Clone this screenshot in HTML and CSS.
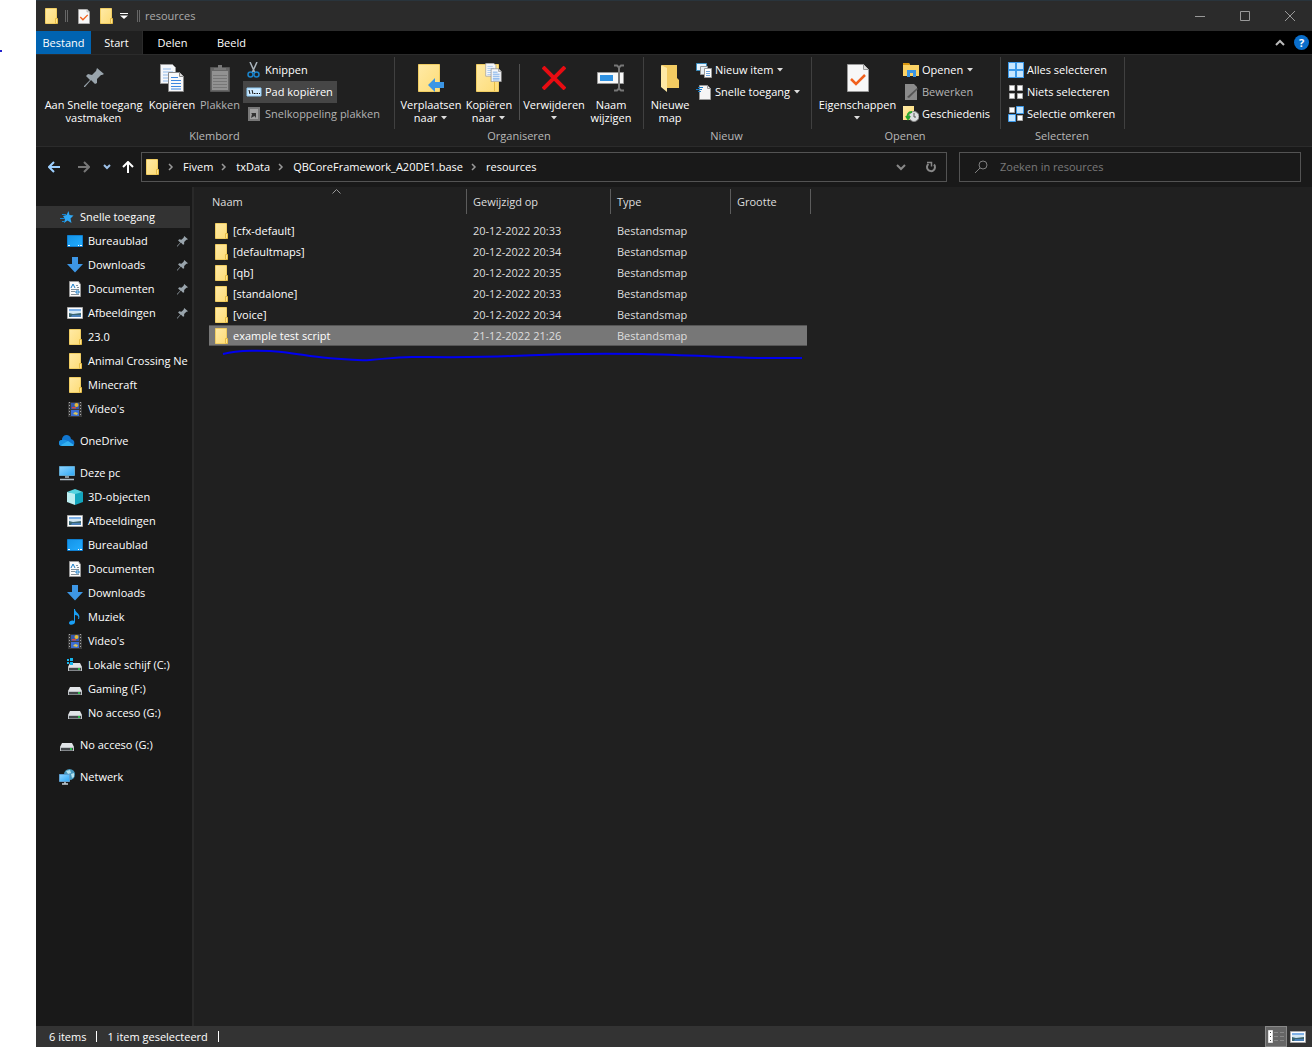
FILE: index.html
```html
<!DOCTYPE html>
<html lang="nl">
<head>
<meta charset="utf-8">
<title>resources</title>
<link rel="stylesheet" href="styles.css">
</head>
<body>
<svg class="defs" aria-hidden="true">
  <defs>
    <linearGradient id="g-folder" x1="0" y1="0" x2="1" y2="1"><stop offset="0" stop-color="#ffeaa6"/><stop offset="1" stop-color="#fddc77"/></linearGradient>
    <linearGradient id="g-blue" x1="0" y1="0" x2="1" y2="1"><stop offset="0" stop-color="#1492e6"/><stop offset="1" stop-color="#22adff"/></linearGradient>
    <linearGradient id="g-screen" x1="0" y1="0" x2="1" y2="1"><stop offset="0" stop-color="#8fd4ff"/><stop offset="1" stop-color="#2ea8f5"/></linearGradient>
  </defs>
  <symbol id="folder" viewBox="0 0 16 16"><path d="M2.500 .5h11v15h-11z" fill="url(#g-folder)" stroke="#f0cd63"/><path d="M12.500 15.500v-5h2v5z" fill="#ffe391" stroke="#e6bd45"/></symbol>
  <symbol id="pin" viewBox="0 0 20 20"><path d="M13 0l7 6-2 1-1 0-4 4 0 4-2 1-4-4-6 7-1 0 0-1 6-6-4-4 2-2 4 1 4-4z" fill="#99a4ac"/></symbol>
  <symbol id="down" viewBox="0 0 8 4"><path d="M1 0h6L4 3.500z" fill="#ddd"/></symbol>
  <symbol id="copy" viewBox="0 0 24 28"><path d="M.5.500h12l3 3v16H.5z" fill="#f5f7fa" stroke="#999"/><path d="M3 5h8M3 8h10M3 11h10M3 14h10M3 17h6" stroke="#8fb9ea"/><path d="M8.500 8.500h11l4 4v15h-15z" fill="#f8f9fb" stroke="#888"/><path d="M19.500 8.500v4h4" fill="#ddd" stroke="#888"/><path d="M11 13.500h7M11 16.500h10M11 19.500h10M11 22.500h10M11 25h10" stroke="#3d87e0"/></symbol>
  <symbol id="check" viewBox="0 0 22 28"><path d="M.5.500h16l5 5v22H.5z" fill="#f7f7f7" stroke="#999"/><path d="M16.500.500v5h5" fill="#ddd" stroke="#999"/><path d="M4 15l5 5 9-9" fill="none" stroke="#f1601c" stroke-width="2.500"/></symbol>
  <symbol id="desktop" viewBox="0 0 16 16"><path d="M.5 2.500h15v11H.5z" fill="url(#g-blue)" stroke="#0f7fd0"/><path d="M1 12.500h2M11 12.500h1M13 12.500h2" stroke="#fff"/></symbol>
  <symbol id="download" viewBox="0 0 16 16"><path d="M5 0h6v7h5L8 15.500 0 7h5z" fill="#3d97e6"/></symbol>
  <symbol id="document" viewBox="0 0 16 16"><path d="M2.500.500h9l2 3v12h-11z" fill="#fafafa" stroke="#999"/><path d="M4 8.500h8M4 10.500h4M4 13.500h8M9 4.500h2M10 6.500h2" stroke="#82909b"/><path d="M4 7l2-4 2 4M9 10h3v2H9z" fill="none" stroke="#1c7ec7"/></symbol>
  <symbol id="picture" viewBox="0 0 16 16"><path d="M.5 2.500h15v11H.5z" fill="#fff" stroke="#aaa"/><path d="M2 4h12v8H2z" fill="#7fb1e8"/><path d="M2 6h12v3H2z" fill="#d4e8f4"/><path d="M2 8l4 1 8-1v4H2z" fill="#3a6570"/><path d="M5 10h9v2H4z" fill="#4b80b8"/></symbol>
  <symbol id="video" viewBox="0 0 16 16"><path d="M1 1h14v15H1z" fill="#3a3a3a"/><path d="M2.500 1v15M13.500 1v15" stroke="#aaa" stroke-dasharray="1 2"/><path d="M4 2h8v6H4z" fill="#3457ad"/><path d="M4 9h8v6H4z" fill="#3d6fd3"/><path d="M5 6h4v1.500H5z" fill="#d04a42"/><circle cx="9.500" cy="4" r="2" fill="#e6b934"/><path d="M6 13l2-2 3 1-1 2z" fill="#ddc657"/></symbol>
  <symbol id="cloud" viewBox="0 0 16 16"><path d="M3 7a4.500 4.500 0 0 1 9-1 4 4 0 0 1 2 7H3a3 3 0 0 1 0-6z" fill="#1176cf"/><path d="M3 7c3-1 6 1 8 3l-8 3a3 3 0 0 1 0-6z" fill="#1a91e2"/><path d="M2 12l7-4 6 4-1 1H3z" fill="#34b1f1"/></symbol>
  <symbol id="pc" viewBox="0 0 16 16"><path d="M.5 1.500h15v9H.5z" fill="url(#g-screen)" stroke="#5fa7d0"/><path d="M6 12h4M1 14.500h14" stroke="#aebdc6" stroke-width="1.500"/></symbol>
  <symbol id="cube" viewBox="0 0 16 16"><path d="M0 3l8 1v12l-8-3z" fill="#bdeef1"/><path d="M8 4l8-1v10l-8 3z" fill="#12a5bd"/><path d="M0 3l8-3 8 3-8 2z" fill="#54d3e0"/></symbol>
  <symbol id="music" viewBox="0 0 16 16"><path d="M7 0h1c0 4 6 4 4 10h-1c1-3-1-4-3-4v7c0 3-6 4-6 1 0-2 3-3 5-2z" fill="#1a9ff5"/></symbol>
  <symbol id="drive" viewBox="0 0 16 16"><path d="M3 6h10l2 4H1z" fill="#e1e4e7"/><path d="M1 10h14v4H1z" fill="#bfc3c7"/><path d="M2 11h12v2.500H2z" fill="#43474a"/><path d="M11 12h2" stroke="#25e34c" stroke-width="1.500"/></symbol>
  <symbol id="sysdrive" viewBox="0 0 16 16"><path d="M3 6h10l2 4H1z" fill="#e1e4e7"/><path d="M1 10h14v4H1z" fill="#bfc3c7"/><path d="M2 11h12v2.500H2z" fill="#43474a"/><path d="M11 12h2" stroke="#25e34c" stroke-width="1.500"/><path d="M0 2h2v2H0zM3 1h3v3H3zM0 5h2v2H0zM3 5h3v3H3z" fill="#15b7f0"/></symbol>
  <symbol id="network" viewBox="0 0 16 16"><circle cx="10.500" cy="5.500" r="5.500" fill="#4697bd"/><path d="M7 2l4-1 1 3-3 1zM12 5l3-1v4l-2 1z" fill="#b5e1ee"/><path d="M.5 5.500h10v7H.5z" fill="url(#g-screen)" stroke="#5e9fd0"/><path d="M3 15h6M6 13v2" stroke="#c5d0d6" stroke-width="1.500"/></symbol>
  <symbol id="star" viewBox="0 0 16 16"><path d="M9.500 2l1 4 4 .5-3 3 1 4.500-4-2.500L5 14l1-4-2-3 3.500-1z" fill="#2fa8f5"/><path d="M3 5.500h4M1 9.500h5M3 12.500h3" stroke="#1683cd"/></symbol>
  <symbol id="chev" viewBox="0 0 6 8"><path d="M1 1l3 3-3 3" fill="none" stroke="#999" stroke-width="1.500"/></symbol>
</svg>

<div class="page">
<span class="dot"></span>
<main class="window">
  <header class="titlebar">
    <svg class="i16"><use href="#folder"/></svg>
    <span class="grip"></span>
    <button class="quick" aria-label="Eigenschappen"><svg class="i-check-s"><use href="#check"/></svg></button>
    <button class="quick" aria-label="Nieuwe map"><svg class="i16"><use href="#folder"/></svg></button>
    <button class="quick caret" aria-label="Aanpassen"><svg width="8" height="6"><path d="M0 .5h8" stroke="#fff"/><path d="M0 2.500h8L4 6z" fill="#fff"/></svg></button>
    <span class="grip"></span>
    <h1 class="title">resources</h1>
    <div class="controls">
      <button aria-label="Minimaliseren"><svg width="10" height="10"><path d="M0 5.500h10" stroke="#999"/></svg></button>
      <button aria-label="Maximaliseren"><svg width="10" height="10"><path d="M.5.500h9v9h-9z" fill="none" stroke="#999"/></svg></button>
      <button aria-label="Sluiten"><svg width="10" height="10"><path d="M0 0l10 10M10 0L0 10" stroke="#999"/></svg></button>
    </div>
  </header>

  <nav class="tabs">
    <button class="tab file">Bestand</button>
    <button class="tab active">Start</button>
    <button class="tab">Delen</button>
    <button class="tab">Beeld</button>
    <div class="tabs-end">
      <button aria-label="Lint inklappen"><svg width="10" height="7"><path d="M1 6l4-4 4 4" fill="none" stroke="#bbb" stroke-width="2"/></svg></button>
      <button class="help" aria-label="Help">?</button>
    </div>
  </nav>

  <section class="ribbon">
    <div class="group clip">
      <div class="tools">
        <button class="big w107"><svg class="i-pin"><use href="#pin"/></svg><span>Aan Snelle toegang<br>vastmaken</span></button>
        <button class="big w50"><svg class="i-copy"><use href="#copy"/></svg><span>Kopiëren</span></button>
        <button class="big w46 off"><svg width="20" height="28"><path d="M.5 3.500h19v24H.5z" fill="#666" stroke="#555"/><path d="M2 7h16v19H2z" fill="#929292"/><path d="M3 11.500h14M3 14.500h14M3 17.500h14M3 20.500h14M3 23.500h14" stroke="#777"/><path d="M4 6V4h4V1h4v3h4v2z" fill="#777"/></svg><span>Plakken</span></button>
        <div class="stack">
          <button class="small"><svg class="i16"><path d="M4 0l5 11M11 0L6 11" stroke="#aab4bc" stroke-width="1.500"/><circle cx="4.500" cy="12.500" r="2.500" fill="none" stroke="#1a83ca" stroke-width="1.500"/><circle cx="10.500" cy="12.500" r="2.500" fill="none" stroke="#1a83ca" stroke-width="1.500"/></svg>Knippen</button>
          <button class="small hover"><svg class="i16"><path d="M1 4h14v8H1z" fill="#cfeaff" stroke="#8ecbf5"/><path d="M3 6l1 4M6 6l1 4M8 9.500h1.500M10.500 9.500H12M13 9.500h1" stroke="#111"/></svg>Pad kopiëren</button>
          <button class="small off"><svg class="i16"><path d="M2 1h12v14H2z" fill="#777"/><path d="M4 3h8v10H4z" fill="#a0a0a0"/><path d="M5 12l1-4-1-1h5v5L8.500 10z" fill="#333"/></svg>Snelkoppeling plakken</button>
        </div>
      </div>
      <h2>Klembord</h2>
    </div>

    <div class="group org">
      <div class="tools">
        <button class="big w62"><svg width="26" height="30"><path d="M.5 1.500h21v27H.5z" fill="url(#g-folder)" stroke="#f0cd63"/><path d="M10 22l7-7v4h9v6h-9v4z" fill="#3b96e5"/></svg><span>Verplaatsen<br>naar <svg class="dd"><use href="#down"/></svg></span></button>
        <button class="big w54"><svg width="26" height="30"><path d="M.5 1.500h22v27H.5z" fill="url(#g-folder)" stroke="#f0cd63"/><path d="M18.500 28v-9" stroke="#e6bd45"/><svg x="9" y="0" width="17" height="19"><use href="#copy"/></svg></svg><span>Kopiëren<br>naar <svg class="dd"><use href="#down"/></svg></span></button>
        <span class="sep"></span>
        <button class="big w64"><svg width="24" height="24"><path d="M1 1l22 22M23 1L1 23" stroke="#e80c12" stroke-width="4"/></svg><span>Verwijderen<br><svg class="dd"><use href="#down"/></svg></span></button>
        <button class="big w50"><svg width="28" height="28"><path d="M.5 8.500h26v11H.5z" fill="#f8f8f8" stroke="#999"/><path d="M3 11h13v6H3z" fill="#2f92e2"/><path d="M17 1.500h3l2 2 2-2h3M22 3v22M17 26.500h3l2-2 2 2h3" fill="none" stroke="#777" stroke-width="2"/></svg><span>Naam<br>wijzigen</span></button>
      </div>
      <h2>Organiseren</h2>
    </div>

    <div class="group new">
      <div class="tools">
        <button class="big w46"><svg width="20" height="28"><path d="M2 1h15v13l2 2v8H2z" fill="#f3cb62"/><path d="M1 1l6 3v24l-6-5z" fill="#ffe9a4"/></svg><span>Nieuwe<br>map</span></button>
        <div class="stack">
          <button class="small"><svg class="i16"><path d="M.5 1.500h10v7H.5z" fill="#e8f5ff" stroke="#3b8fc0"/><path d="M4.500 4.500h7v8h-7z" fill="#e7eef3" stroke="#999"/><path d="M8.500 6.500h7v9h-7z" fill="#fff" stroke="#999"/><path d="M10 9.500h4M10 11.500h4M10 13.500h4" stroke="#6fa4dc"/></svg>Nieuw item <svg class="dd"><use href="#down"/></svg></button>
          <button class="small"><svg class="i16"><path d="M3.500 1.500h8l3 3v11h-11z" fill="#f5f5f5" stroke="#999"/><path d="M11.500 1.500v3h3" stroke="#999" fill="none"/><path d="M2 3.500h5M0 5.500h6M2 7.500h3" stroke="#1779c2"/></svg>Snelle toegang <svg class="dd"><use href="#down"/></svg></button>
        </div>
      </div>
      <h2>Nieuw</h2>
    </div>

    <div class="group open">
      <div class="tools">
        <button class="big w85"><svg class="i-check"><use href="#check"/></svg><span>Eigenschappen<br><svg class="dd"><use href="#down"/></svg></span></button>
        <div class="stack">
          <button class="small"><svg class="i16"><path d="M0 1h6l1 2h9v11H0z" fill="#fbd264"/><path d="M0 1h6l1 2H0z" fill="#d9960f"/><path d="M4 15V8h9v7h-3v-4H7v4z" fill="#3c95e2"/></svg>Openen <svg class="dd"><use href="#down"/></svg></button>
          <button class="small off"><svg class="i16"><path d="M2 0h9l3 3v13H2z" fill="#8b8b8b"/><path d="M4 13L14 4l1 1-9 9z" fill="#555"/></svg>Bewerken</button>
          <button class="small"><svg class="i16"><path d="M0 0h11v14H0z" fill="url(#g-folder)"/><circle cx="11" cy="10.500" r="5" fill="#dde0e1" stroke="#888"/><path d="M11 7v4h2" fill="none" stroke="#555"/><path d="M9 6C5 6 4 9 5 12M3 10l2 3 2-3" fill="none" stroke="#26a52d" stroke-width="2"/></svg>Geschiedenis</button>
        </div>
      </div>
      <h2>Openen</h2>
    </div>

    <div class="group select">
      <div class="tools">
        <div class="stack">
          <button class="small"><svg class="i16"><path d="M0 0h16v16H0z" fill="#3b98e8"/><path d="M1 1h6v6H1zM9 1h6v6H9zM1 9h6v6H1zM9 9h6v6H9z" fill="#c5e6ff"/></svg>Alles selecteren</button>
          <button class="small"><svg class="i16"><path d="M1.500 1.500h5v5h-5zM9.500 1.500h5v5h-5zM1.500 9.500h5v5h-5zM9.500 9.500h5v5h-5z" fill="#fff" stroke="#aaa"/></svg>Niets selecteren</button>
          <button class="small"><svg class="i16"><path d="M1.500 1.500h5v5h-5zM9.500 9.500h5v5h-5z" fill="#fff" stroke="#aaa"/><path d="M8.500.500h7v7h-7zM.5 8.500h7v7h-7z" fill="#c5e6ff" stroke="#3b98e8"/></svg>Selectie omkeren</button>
        </div>
      </div>
      <h2>Selecteren</h2>
    </div>
  </section>

  <div class="locbar">
    <div class="history">
      <button aria-label="Terug"><svg width="12" height="12"><path d="M12 6H1M6 1L1 6l5 5" fill="none" stroke="#9dd0ff" stroke-width="2"/></svg></button>
      <button aria-label="Vooruit"><svg width="12" height="12"><path d="M0 6h11M6 1l5 5-5 5" fill="none" stroke="#777" stroke-width="2"/></svg></button>
      <button class="recent" aria-label="Recente locaties"><svg width="8" height="6"><path d="M1 1l3 3 3-3" fill="none" stroke="#9dc0e8" stroke-width="2"/></svg></button>
      <button class="up" aria-label="Omhoog"><svg width="12" height="12"><path d="M6 12V1M1 6l5-5 5 5" fill="none" stroke="#fff" stroke-width="2"/></svg></button>
    </div>
    <div class="address">
      <svg class="i16"><use href="#folder"/></svg>
      <svg class="chev"><use href="#chev"/></svg><a href="#">Fivem</a>
      <svg class="chev"><use href="#chev"/></svg><a href="#">txData</a>
      <svg class="chev"><use href="#chev"/></svg><a href="#">QBCoreFramework_A20DE1.base</a>
      <svg class="chev"><use href="#chev"/></svg><a href="#">resources</a>
      <div class="address-end">
        <button aria-label="Vorige locaties"><svg width="10" height="7"><path d="M1 1l4 4 4-4" fill="none" stroke="#888" stroke-width="2"/></svg></button>
        <button aria-label="Vernieuwen"><svg width="12" height="12"><path d="M9 3.500a4 4 0 1 1-5.500-.5" fill="none" stroke="#888" stroke-width="2"/><path d="M2 1.500h4.500v4" fill="none" stroke="#888" stroke-width="1.500"/></svg></button>
      </div>
    </div>
    <label class="search"><svg width="14" height="14"><circle cx="9" cy="5" r="4" fill="none" stroke="#808080"/><path d="M6 8l-5 5" stroke="#808080"/></svg><input type="search" placeholder="Zoeken in resources" aria-label="Zoeken in resources"></label>
  </div>

  <div class="content">
    <aside class="sidebar">
      <ul>
        <li><a class="root current" href="#"><svg class="i16"><use href="#star"/></svg>Snelle toegang</a></li>
        <li><a href="#"><svg class="i16"><use href="#desktop"/></svg>Bureaublad<svg class="pinned"><use href="#pin"/></svg></a></li>
        <li><a href="#"><svg class="i16"><use href="#download"/></svg>Downloads<svg class="pinned"><use href="#pin"/></svg></a></li>
        <li><a href="#"><svg class="i16"><use href="#document"/></svg>Documenten<svg class="pinned"><use href="#pin"/></svg></a></li>
        <li><a href="#"><svg class="i16"><use href="#picture"/></svg>Afbeeldingen<svg class="pinned"><use href="#pin"/></svg></a></li>
        <li><a href="#"><svg class="i16"><use href="#folder"/></svg>23.0</a></li>
        <li><a href="#"><svg class="i16"><use href="#folder"/></svg>Animal Crossing Ne</a></li>
        <li><a href="#"><svg class="i16"><use href="#folder"/></svg>Minecraft</a></li>
        <li><a href="#"><svg class="i16"><use href="#video"/></svg>Video's</a></li>
      </ul>
      <ul><li><a class="root" href="#"><svg class="i16"><use href="#cloud"/></svg>OneDrive</a></li></ul>
      <ul>
        <li><a class="root" href="#"><svg class="i16"><use href="#pc"/></svg>Deze pc</a></li>
        <li><a href="#"><svg class="i16"><use href="#cube"/></svg>3D-objecten</a></li>
        <li><a href="#"><svg class="i16"><use href="#picture"/></svg>Afbeeldingen</a></li>
        <li><a href="#"><svg class="i16"><use href="#desktop"/></svg>Bureaublad</a></li>
        <li><a href="#"><svg class="i16"><use href="#document"/></svg>Documenten</a></li>
        <li><a href="#"><svg class="i16"><use href="#download"/></svg>Downloads</a></li>
        <li><a href="#"><svg class="i16"><use href="#music"/></svg>Muziek</a></li>
        <li><a href="#"><svg class="i16"><use href="#video"/></svg>Video's</a></li>
        <li><a href="#"><svg class="i16"><use href="#sysdrive"/></svg>Lokale schijf (C:)</a></li>
        <li><a href="#"><svg class="i16"><use href="#drive"/></svg>Gaming (F:)</a></li>
        <li><a href="#"><svg class="i16"><use href="#drive"/></svg>No acceso (G:)</a></li>
      </ul>
      <ul><li><a class="root" href="#"><svg class="i16"><use href="#drive"/></svg>No acceso (G:)</a></li></ul>
      <ul><li><a class="root" href="#"><svg class="i16"><use href="#network"/></svg>Netwerk</a></li></ul>
    </aside>

    <section class="files">
      <table>
        <colgroup><col class="c-name"><col class="c-date"><col class="c-type"><col class="c-size"><col class="c-end"></colgroup>
        <thead><tr><th>Naam<svg class="sort" width="9" height="5"><path d="M.5 4.500l4-4 4 4" fill="none" stroke="#999"/></svg></th><th>Gewijzigd op</th><th>Type</th><th>Grootte</th><th></th></tr></thead>
        <tbody>
          <tr><td><svg class="i16"><use href="#folder"/></svg>[cfx-default]</td><td>20-12-2022 20:33</td><td>Bestandsmap</td><td></td></tr>
          <tr><td><svg class="i16"><use href="#folder"/></svg>[defaultmaps]</td><td>20-12-2022 20:34</td><td>Bestandsmap</td><td></td></tr>
          <tr><td><svg class="i16"><use href="#folder"/></svg>[qb]</td><td>20-12-2022 20:35</td><td>Bestandsmap</td><td></td></tr>
          <tr><td><svg class="i16"><use href="#folder"/></svg>[standalone]</td><td>20-12-2022 20:33</td><td>Bestandsmap</td><td></td></tr>
          <tr><td><svg class="i16"><use href="#folder"/></svg>[voice]</td><td>20-12-2022 20:34</td><td>Bestandsmap</td><td></td></tr>
          <tr class="selected"><td><svg class="i16"><use href="#folder"/></svg>example test script</td><td>21-12-2022 21:26</td><td>Bestandsmap</td><td></td></tr>
        </tbody>
      </table>
      <svg class="stroke" width="584" height="14"><path d="M1 5C16 1 42 1 60 3S90 8 106 9s26 3 42 2 22-3 42-3 60 1 100-1 80-3 130-2 90 4 120 4h40" fill="none" stroke="#0000f0" stroke-width="2"/></svg>
    </section>
  </div>

  <footer class="status">
    <span>6 items</span>
    <span>1 item geselecteerd</span>
    <div class="views">
      <button class="on" aria-label="Details"><svg width="16" height="14"><path d="M.5.500h4v12h-4z" fill="#fff" stroke="#ddd"/><path d="M2 2.500h1M2 6.500h1M2 10.500h1" stroke="#444"/><path d="M6 2.500h4M12 2.500h4M6 6.500h4M12 6.500h4M6 10.500h4M12 10.500h4" stroke="#888"/></svg></button>
      <button aria-label="Grote pictogrammen"><svg class="i16"><use href="#picture"/></svg></button>
    </div>
  </footer>
</main>
</div>
</body>
</html>
```
FILE: styles.css
```css
* { box-sizing: border-box; }
body { margin: 0; background: #fff; color: #fff; font: 11px/16px "Open Sans", "Noto Sans", sans-serif; }
button { margin: 0; padding: 0; border: 0; background: none; color: inherit; font: inherit; }
svg { flex: none; }
a { color: inherit; text-decoration: none; }
h1, h2, ul { margin: 0; padding: 0; font-size: 11px; font-weight: 400; list-style: none; }
.defs { position: absolute; width: 0; height: 0; }
.i16 { width: 16px; height: 16px; }

.page { position: relative; padding-left: 36px; }
.dot { position: absolute; left: 0; top: 50px; width: 2px; height: 2px; background: #22c; }
.window { display: flex; flex-direction: column; min-height: 100vh; background: #202020; }

/* Title bar */
.titlebar { display: flex; align-items: center; height: 31px; padding-left: 7px; background: #2b2b2b; border-top: 1px solid #29343c; }
.grip { width: 3px; height: 12px; margin-left: 6px; border: solid #666; border-width: 0 1px; }
.quick { display: flex; align-items: center; justify-content: center; width: 22px; height: 22px; }
.grip + .quick { margin-left: 5px; }
.quick.caret { width: 14px; }
.i-check-s { width: 12px; height: 15px; }
.title { margin-left: 5px; color: #aaa; }
.controls { display: flex; margin-left: auto; }
.controls button { display: flex; align-items: center; justify-content: center; width: 45px; height: 30px; }

/* Ribbon tabs */
.tabs { display: flex; height: 23px; background: #000; }
.tab { width: 59px; }
.tab.file { width: 55px; background: #0063b1; }
.tab.active { width: 52px; background: #202020; border-right: 1px solid #2b2b2b; }
.tabs-end { display: flex; align-items: center; gap: 9px; margin-left: auto; padding-right: 3px; }
.tabs-end button { display: flex; }
.tabs-end .help { width: 15px; height: 15px; justify-content: center; border-radius: 50%; background: #0a6ecb; font-weight: 700; line-height: 15px; }

/* Ribbon */
.ribbon { display: flex; height: 93px; border: solid #2b2b2b; border-width: 1px 0; }
.group { display: flex; flex: none; flex-direction: column; padding: 2px 0 2px 3px; background: linear-gradient(#404040, #404040) right 2px / 1px 72px no-repeat; }
.group.clip { width: 359px; padding-left: 4px; }
.group.org { width: 249px; padding-left: 5px; }
.group.new { width: 168px; }
.group.open { width: 189px; }
.group.select { width: 124px; padding-left: 4px; }
.group h2 { padding: 1px 6px 0 0; color: #b8b8b8; text-align: center; }
.tools { display: flex; height: 72px; }
.big { display: grid; grid-template-rows: 41px auto; justify-items: center; align-items: center; align-content: start; line-height: 13px; white-space: nowrap; }
.big > svg { display: block; }
.w107 { width: 107px; } .w85 { width: 85px; } .w64 { width: 64px; } .w62 { width: 62px; }
.w54 { width: 54px; } .w50 { width: 50px; } .w46 { width: 46px; }
.i-pin { width: 20px; height: 20px; }
.i-copy { width: 24px; height: 28px; }
.i-check { width: 22px; height: 28px; }
.dd { width: 8px; height: 4px; vertical-align: 2px; }
.off { color: #b4b4b4; }
.sep { width: 1px; height: 56px; margin: 7px 2px 0 3px; background: #505050; }
.stack { padding-top: 2px; }
.small { display: flex; align-items: center; gap: 3px; height: 22px; padding: 0 4px 0 3px; white-space: nowrap; }
.small.hover { background: #464646; }

/* Location bar */
.locbar { display: flex; align-items: center; height: 40px; padding-right: 11px; background: #191919; }
.history { display: flex; width: 105px; padding-left: 12px; }
.history button { display: flex; align-items: center; width: 12px; margin-right: 18px; }
.history .recent { width: 8px; margin: 0 11px 0 -5px; }
.history .up { margin: 0; }
.address { display: flex; flex: 802 1 0; align-items: center; height: 30px; padding-left: 2px; border: 1px solid #535353; }
.chev { width: 6px; height: 8px; margin: 0 9px 0 8px; }
.address-end { display: flex; margin-left: auto; }
.address-end button { display: flex; align-items: center; justify-content: center; width: 30px; }
.search { display: flex; flex: 326 1 0; align-items: center; gap: 12px; height: 30px; margin-left: 12px; padding-left: 14px; border: 1px solid #535353; }
.search input { flex: 1; min-width: 0; padding: 0; border: 0; outline: 0; background: none; color: #fff; font: inherit; }
.search input::placeholder { color: #7a7a7a; opacity: 1; }

/* Navigation pane */
.content { display: flex; flex: 1; }
.sidebar { display: flex; flex: none; flex-direction: column; gap: 8px; width: 158px; padding-top: 18px; border-right: 2px solid #292929; background: #191919; }
.sidebar li { height: 24px; padding: 1px 2px 1px 0; }
.sidebar a { display: flex; align-items: center; gap: 5px; height: 22px; padding-left: 31px; white-space: nowrap; }
.sidebar a.root { padding-left: 23px; }
.sidebar a.current { background: #333; }
.pinned { width: 11px; height: 11px; margin: 0 2px 0 auto; }

/* File list */
.files { position: relative; flex: 1; padding: 2px 0 0 15px; }
.files table { width: 602px; border-spacing: 0; table-layout: fixed; }
.c-name { width: 258px; } .c-date { width: 144px; } .c-type { width: 120px; } .c-size { width: 76px; } .c-end { width: 4px; }
.files th { position: relative; height: 25px; padding: 0 0 0 6px; border-right: 1px solid #5c5c5c; color: #dedede; font-weight: 400; text-align: left; }
.files th:first-child { padding-left: 3px; }
.files th:nth-child(4) { border-right: 0; }
.files th:empty { padding: 0; }
.sort { position: absolute; left: 123px; top: 0; }
.files thead::after { content: ""; display: block; height: 6px; }
.files td { height: 21px; padding: 0 0 0 6px; color: #dedede; }
.files td:first-child { display: flex; align-items: center; gap: 4px; padding-left: 4px; color: #fff; }
.selected td { background: #777; box-shadow: inset 0 1px #555, inset 0 -1px #555; }
.stroke { position: absolute; left: 28px; top: 162px; }

/* Status bar */
.status { display: flex; align-items: center; height: 21px; padding-left: 13px; background: #333; }
.status span { margin-right: 10px; padding-right: 10px; border-right: 1px solid #fff; line-height: 11px; }
.views { display: flex; margin-left: auto; padding-right: 3px; }
.views button { display: flex; align-items: center; justify-content: center; width: 22px; height: 21px; }
.views .on { border: 1px solid #888; background: #666; }
```
